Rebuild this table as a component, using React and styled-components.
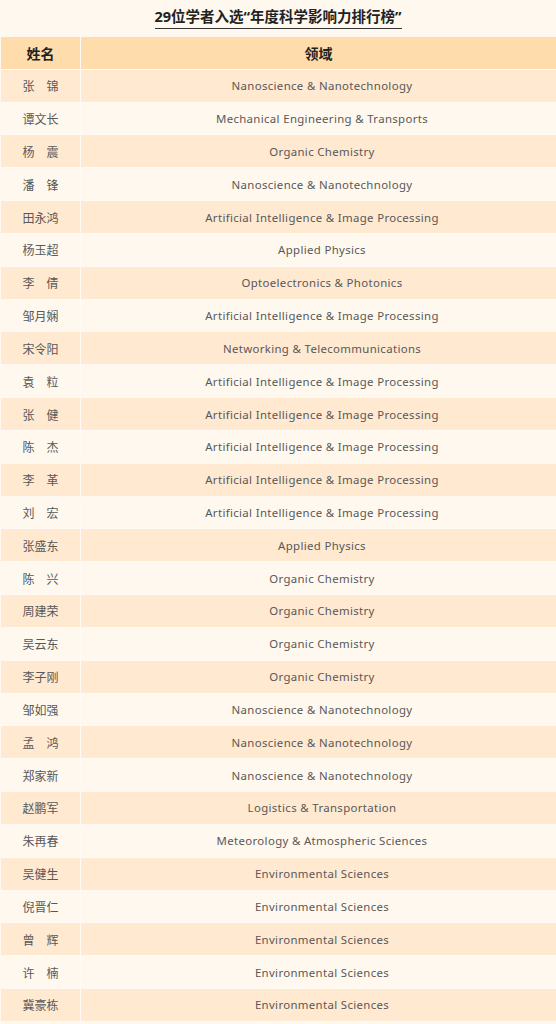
import React from "react";
import styled, { createGlobalStyle } from "styled-components";

const Global = createGlobalStyle`
  html, body { margin: 0; padding: 0; background: #fff8ef; }
  body { font-family: "Noto Sans", "Noto Sans CJK SC", sans-serif; }
`;

const Page = styled.div`
  width: 556px;
  height: 1024px;
  background: #fff8ef;
  overflow: hidden;
  display: flex;
  flex-direction: column;
  align-items: stretch;
`;

const TitleBar = styled.div`
  height: 37px;
  display: flex;
  justify-content: center;
  align-items: flex-start;
  padding-top: 7px;
  box-sizing: border-box;
`;

const Title = styled.h1`
  margin: 0;
  font-family: "Noto Sans", "Noto Sans CJK SC", sans-serif;
  font-size: 14.5px;
  font-weight: 700;
  line-height: 18px;
  color: #222;
  padding-bottom: 3px;
  border-bottom: 1px solid #333;
`;

const Table = styled.div`
  margin-left: 1px;
  display: grid;
  grid-template-columns: 79px 1fr;
  grid-auto-rows: 31.83px;
  gap: 1px;
  background: #fffaf4;
`;

const Cell = styled.div`
  display: flex;
  align-items: center;
  justify-content: center;
  padding-left: ${(p) => (p.$latin ? "7px" : "0")};
  background: ${(p) => (p.$head ? "#ffdcab" : p.$odd ? "#ffe9d1" : "#fff8ef")};
  color: ${(p) => (p.$head ? "#222" : "#585858")};
  font-family: ${(p) =>
    p.$latin ? '"Noto Sans", sans-serif' : '"Noto Sans CJK SC", sans-serif'};
  font-size: ${(p) => (p.$head ? "14px" : p.$latin ? "11.4px" : "12px")};
  font-weight: ${(p) => (p.$head ? 700 : 400)};
  letter-spacing: ${(p) => (p.$latin ? "0.35px" : "0")};
  white-space: pre;
`;

const rows = [
  ["张　锦", "Nanoscience & Nanotechnology"],
  ["谭文长", "Mechanical Engineering & Transports"],
  ["杨　震", "Organic Chemistry"],
  ["潘　锋", "Nanoscience & Nanotechnology"],
  ["田永鸿", "Artificial Intelligence & Image Processing"],
  ["杨玉超", "Applied Physics"],
  ["李　倩", "Optoelectronics & Photonics"],
  ["邹月娴", "Artificial Intelligence & Image Processing"],
  ["宋令阳", "Networking & Telecommunications"],
  ["袁　粒", "Artificial Intelligence & Image Processing"],
  ["张　健", "Artificial Intelligence & Image Processing"],
  ["陈　杰", "Artificial Intelligence & Image Processing"],
  ["李　革", "Artificial Intelligence & Image Processing"],
  ["刘　宏", "Artificial Intelligence & Image Processing"],
  ["张盛东", "Applied Physics"],
  ["陈　兴", "Organic Chemistry"],
  ["周建荣", "Organic Chemistry"],
  ["吴云东", "Organic Chemistry"],
  ["李子刚", "Organic Chemistry"],
  ["邹如强", "Nanoscience & Nanotechnology"],
  ["孟　鸿", "Nanoscience & Nanotechnology"],
  ["郑家新", "Nanoscience & Nanotechnology"],
  ["赵鹏军", "Logistics & Transportation"],
  ["朱再春", "Meteorology & Atmospheric Sciences"],
  ["吴健生", "Environmental Sciences"],
  ["倪晋仁", "Environmental Sciences"],
  ["曾　辉", "Environmental Sciences"],
  ["许　楠", "Environmental Sciences"],
  ["冀豪栋", "Environmental Sciences"],
];

export default function App() {
  return (
    <Page>
      <Global />
      <TitleBar>
        <Title>29位学者入选“年度科学影响力排行榜”</Title>
      </TitleBar>
      <Table>
        <Cell $head>姓名</Cell>
        <Cell $head>领域</Cell>
        {rows.map(([name, field], i) => (
          <React.Fragment key={i}>
            <Cell $odd={i % 2 === 0}>{name}</Cell>
            <Cell $odd={i % 2 === 0} $latin>
              {field}
            </Cell>
          </React.Fragment>
        ))}
      </Table>
    </Page>
  );
}
